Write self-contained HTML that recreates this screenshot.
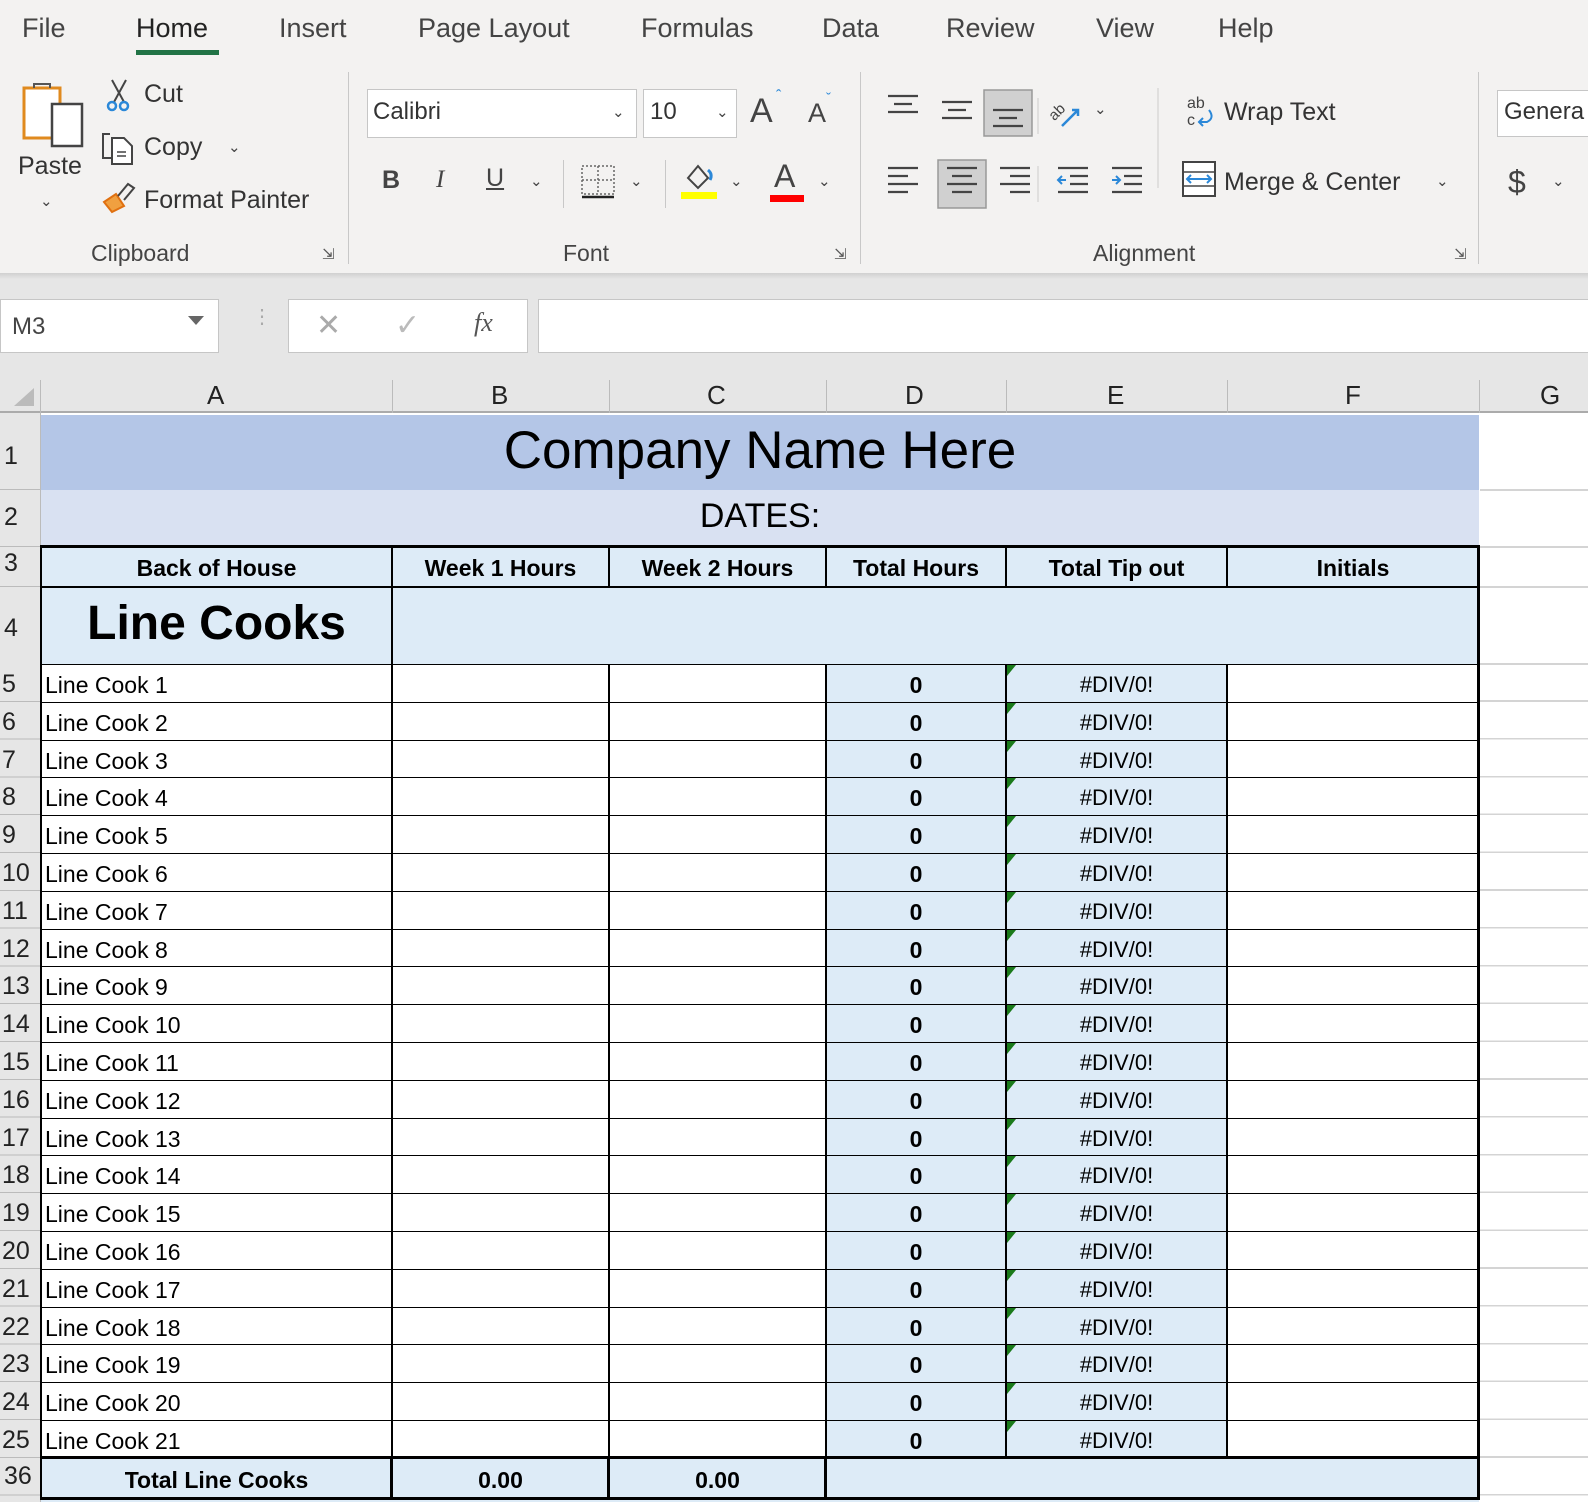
<!DOCTYPE html>
<html><head><meta charset="utf-8"><style>
*{margin:0;padding:0;box-sizing:border-box}
body{width:1588px;height:1502px;overflow:hidden;background:#fff;font-family:"Liberation Sans",sans-serif;position:relative;color:#000}
.a{position:absolute;white-space:nowrap}
.rib{position:absolute;left:0;top:0;width:1588px;height:273px;background:#f3f2f1}
.tab{position:absolute;top:13px;font-size:27px;color:#444}
.t{position:absolute;font-size:25px;color:#333;white-space:nowrap}
.gl{position:absolute;top:240px;font-size:23px;color:#444}
.sep{position:absolute;width:1px;background:#c8c8c8}
.chev{position:absolute;font-size:15px;color:#444}
.r{position:absolute;left:41px;width:1438px;height:38px;border-top:1.6px solid #000}
.r b{position:absolute;left:-41px;width:40px;top:0;height:37px;font-weight:normal;font-size:25px;color:#222;padding-left:2px;line-height:38px}
.r i{position:absolute;left:4px;font-style:normal;font-size:23px;line-height:38px;top:1px}
.r s{position:absolute;left:785px;width:180px;text-align:center;text-decoration:none;font-weight:bold;font-size:23px;line-height:38px;top:1px}
.r u{position:absolute;left:965px;width:221px;text-align:center;text-decoration:none;font-size:22px;line-height:38px;top:1px}
.r em{position:absolute;left:966px;top:0;width:0;height:0;border-top:11px solid #1a7a1a;border-right:9px solid transparent}
.v{position:absolute;width:1.6px;background:#000}
.hd{position:absolute;font-size:26px;color:#222;top:380px}
</style></head><body>
<div class="rib"></div>
<div class="a" style="left:0;top:273px;width:1588px;height:104px;background:#e6e6e6"></div>
<div class="a" style="left:0;top:273px;width:1588px;height:6px;background:linear-gradient(#d0d0d0,#e6e6e6)"></div>
<div class="tab" style="left:22px">File</div>
<div class="tab" style="left:136px;color:#222">Home</div>
<div class="a" style="left:136px;top:50px;width:83px;height:5px;background:#217346"></div>
<div class="tab" style="left:279px">Insert</div>
<div class="tab" style="left:418px">Page Layout</div>
<div class="tab" style="left:641px">Formulas</div>
<div class="tab" style="left:822px">Data</div>
<div class="tab" style="left:946px">Review</div>
<div class="tab" style="left:1096px">View</div>
<div class="tab" style="left:1218px">Help</div>
<svg class="a" style="left:18px;top:80px" width="68" height="70"><rect x="6" y="8" width="36" height="50" fill="#fff" stroke="#e08a1e" stroke-width="3"/><path d="M16 8v-4h16v4" fill="none" stroke="#555" stroke-width="2"/><rect x="34" y="24" width="30" height="42" fill="#fff" stroke="#444" stroke-width="2.5"/></svg>
<div class="t" style="left:18px;top:152px">Paste</div>
<div class="chev" style="left:40px;top:192px">&#8964;</div>
<svg class="a" style="left:104px;top:78px" width="30" height="36"><path d="M8 2l12 22M22 2L10 24" stroke="#444" stroke-width="2"/><circle cx="8" cy="28" r="4" fill="none" stroke="#2b88d8" stroke-width="2.5"/><circle cx="20" cy="28" r="4" fill="none" stroke="#2b88d8" stroke-width="2.5"/></svg>
<div class="t" style="left:144px;top:80px">Cut</div>
<svg class="a" style="left:100px;top:130px" width="38" height="36"><path d="M10 4h-7v24h8" fill="none" stroke="#444" stroke-width="2"/><path d="M12 8h12l8 8v18h-20z" fill="#fff" stroke="#444" stroke-width="2"/><path d="M17 22h9M17 26h9" stroke="#444" stroke-width="1.5"/></svg>
<div class="t" style="left:144px;top:133px">Copy</div>
<div class="chev" style="left:228px;top:138px">&#8964;</div>
<svg class="a" style="left:100px;top:180px" width="38" height="38"><path d="M4 22l12-8 8 12-12 6z" fill="#f0a040" stroke="#e07010" stroke-width="2"/><path d="M18 16l10-12 6 4-10 12" fill="none" stroke="#444" stroke-width="2"/></svg>
<div class="t" style="left:144px;top:186px">Format Painter</div>
<div class="gl" style="left:91px">Clipboard</div>
<div class="a" style="left:322px;top:245px;font-size:15px;color:#555">&#8690;</div>
<div class="sep" style="left:348px;top:72px;height:192px"></div>
<div class="a" style="left:367px;top:89px;width:270px;height:49px;background:#fff;border:1px solid #c6c6c6"></div>
<div class="t" style="left:373px;top:98px;font-size:24px">Calibri</div>
<div class="chev" style="left:612px;top:103px">&#8964;</div>
<div class="a" style="left:643px;top:89px;width:94px;height:49px;background:#fff;border:1px solid #c6c6c6"></div>
<div class="t" style="left:650px;top:98px;font-size:24px">10</div>
<div class="chev" style="left:716px;top:103px">&#8964;</div>
<div class="t" style="left:750px;top:92px;font-size:34px;color:#444">A</div>
<div class="t" style="left:776px;top:88px;font-size:16px;color:#2b88d8">&#710;</div>
<div class="t" style="left:808px;top:98px;font-size:27px;color:#444">A</div>
<div class="t" style="left:826px;top:90px;font-size:15px;color:#2b88d8">&#711;</div>
<div class="t" style="left:382px;top:166px;font-weight:bold;color:#444">B</div>
<div class="t" style="left:436px;top:166px;font-style:italic;font-family:'Liberation Serif',serif;color:#444">I</div>
<div class="t" style="left:486px;top:164px;text-decoration:underline;color:#444">U</div>
<div class="chev" style="left:530px;top:172px">&#8964;</div>
<div class="sep" style="left:563px;top:160px;height:48px"></div>
<svg class="a" style="left:580px;top:164px" width="36" height="38"><rect x="2" y="2" width="32" height="28" fill="none" stroke="#666" stroke-width="1.5" stroke-dasharray="2 2"/><path d="M18 2v28M2 16h32" stroke="#666" stroke-width="1.5" stroke-dasharray="2 2"/><path d="M2 33h32" stroke="#222" stroke-width="2.5"/></svg>
<div class="chev" style="left:630px;top:172px">&#8964;</div>
<div class="sep" style="left:665px;top:160px;height:48px"></div>
<svg class="a" style="left:680px;top:160px" width="40" height="42"><path d="M8 18l10-12 10 12-10 10z" fill="none" stroke="#444" stroke-width="2"/><path d="M28 10q5 4 2 10" fill="none" stroke="#2b88d8" stroke-width="3"/><rect x="1" y="32" width="36" height="7" fill="#ffff00"/></svg>
<div class="chev" style="left:730px;top:172px">&#8964;</div>
<div class="t" style="left:774px;top:158px;font-size:32px;color:#444">A</div>
<div class="a" style="left:770px;top:195px;width:34px;height:7px;background:#f00"></div>
<div class="chev" style="left:818px;top:172px">&#8964;</div>
<div class="gl" style="left:563px">Font</div>
<div class="a" style="left:834px;top:245px;font-size:15px;color:#555">&#8690;</div>
<div class="sep" style="left:860px;top:72px;height:192px"></div>
<svg class="a" style="left:880px;top:88px" width="590" height="125">
<g stroke="#444" stroke-width="2.2">
<path d="M8 8h30M14 16h18M8 24h30"/>
<path d="M62 14h30M68 22h18M62 30h30"/>
<rect x="104" y="2" width="48" height="46" fill="#d0d0d0" stroke="#999" stroke-width="1.5"/>
<path d="M113 22h30M119 30h18M113 38h30"/>
<path d="M8 80h30M8 88h20M8 96h30M8 104h20"/>
<rect x="58" y="72" width="48" height="48" fill="#d0d0d0" stroke="#999" stroke-width="1.5"/>
<path d="M67 80h30M72 88h20M67 96h30M72 104h20"/>
<path d="M120 80h30M130 88h20M120 96h30M130 104h20"/>
<path d="M178 80h30M190 88h18M190 96h18M178 104h30"/>
<path d="M232 80h30M244 88h18M244 96h18M232 104h30"/>
</g>
<path d="M178 92h8M182 88l-4 4 4 4" stroke="#2b88d8" stroke-width="2" fill="none"/>
<path d="M232 92h8M236 88l4 4-4 4" stroke="#2b88d8" stroke-width="2" fill="none"/>
<text x="168" y="26" font-size="15" fill="#444" font-family="Liberation Sans" transform="rotate(-45 180 22)">ab</text>
<path d="M182 38l16-16M192 22h6v6" stroke="#2b88d8" stroke-width="2.5" fill="none"/>
<path d="M158 10v36M158 78v36M278 -10v110" stroke="#ccc" stroke-width="1"/>
<text x="307" y="20" font-size="16" fill="#444" font-family="Liberation Sans">ab</text><text x="307" y="37" font-size="16" fill="#444" font-family="Liberation Sans">c</text>
<path d="M329 22q6 8-2 12h-8M323 30l-4 4 4 4" stroke="#2b88d8" stroke-width="2" fill="none"/>
<rect x="303" y="74" width="32" height="34" fill="#fff" stroke="#444" stroke-width="2"/>
<path d="M303 84h32M303 98h32" stroke="#444" stroke-width="1.5"/>
<path d="M307 91h24M311 87l-4 4 4 4M327 87l4 4-4 4" stroke="#2b88d8" stroke-width="2" fill="none"/>
</svg>
<div class="chev" style="left:1094px;top:100px">&#8964;</div>
<div class="t" style="left:1224px;top:98px">Wrap Text</div>
<div class="t" style="left:1224px;top:168px">Merge &amp; Center</div>
<div class="chev" style="left:1436px;top:172px">&#8964;</div>
<div class="gl" style="left:1093px">Alignment</div>
<div class="a" style="left:1454px;top:245px;font-size:15px;color:#555">&#8690;</div>
<div class="sep" style="left:1478px;top:72px;height:192px"></div>
<div class="a" style="left:1497px;top:90px;width:100px;height:47px;background:#fff;border:1px solid #c6c6c6"></div>
<div class="t" style="left:1504px;top:98px;font-size:24px">Genera</div>
<div class="t" style="left:1508px;top:164px;font-size:32px;color:#444">$</div>
<div class="chev" style="left:1552px;top:172px">&#8964;</div>
<div class="a" style="left:0;top:299px;width:219px;height:54px;background:#fff;border:1px solid #c6c6c6"></div>
<div class="t" style="left:12px;top:313px;font-size:24px;color:#444">M3</div>
<div class="a" style="left:188px;top:316px;width:0;height:0;border-left:8px solid transparent;border-right:8px solid transparent;border-top:9px solid #666"></div>
<div class="a" style="left:252px;top:312px;color:#aaa;font-size:20px;line-height:10px">&#8942;</div>
<div class="a" style="left:288px;top:299px;width:240px;height:54px;background:#fff;border:1px solid #c6c6c6"></div>
<div class="t" style="left:316px;top:308px;font-size:30px;color:#aaa">&#10005;</div>
<div class="t" style="left:395px;top:308px;font-size:30px;color:#bbb">&#10003;</div>
<div class="t" style="left:474px;top:308px;font-size:26px;color:#555;font-family:'Liberation Serif',serif;font-style:italic">fx</div>
<div class="a" style="left:538px;top:299px;width:1060px;height:54px;background:#fff;border:1px solid #c6c6c6"></div>
<div class="a" style="left:0;top:377px;width:1588px;height:36px;background:#e6e6e6;border-bottom:2px solid #ababab"></div>
<div class="a" style="left:14px;top:388px;width:0;height:0;border-left:20px solid transparent;border-bottom:18px solid #bbb"></div>
<div class="a" style="left:40px;top:380px;width:1px;height:33px;background:#bbb"></div>
<div class="a" style="left:392px;top:380px;width:1px;height:33px;background:#bbb"></div>
<div class="a" style="left:609px;top:380px;width:1px;height:33px;background:#bbb"></div>
<div class="a" style="left:826px;top:380px;width:1px;height:33px;background:#bbb"></div>
<div class="a" style="left:1006px;top:380px;width:1px;height:33px;background:#bbb"></div>
<div class="a" style="left:1227px;top:380px;width:1px;height:33px;background:#bbb"></div>
<div class="a" style="left:1479px;top:380px;width:1px;height:33px;background:#bbb"></div>
<div class="hd" style="left:207px">A</div>
<div class="hd" style="left:491px">B</div>
<div class="hd" style="left:707px">C</div>
<div class="hd" style="left:905px">D</div>
<div class="hd" style="left:1107px">E</div>
<div class="hd" style="left:1345px">F</div>
<div class="hd" style="left:1540px">G</div>
<div class="a" style="left:0;top:413px;width:41px;height:1089px;background:#e6e6e6;border-right:1px solid #bbb"></div>
<div class="a" style="left:1480px;top:664px;width:108px;height:838px;background:repeating-linear-gradient(#fff 0,#fff 36.2px,#d4d4d4 36.2px,#d4d4d4 37.8px)"></div>
<div class="a" style="left:1480px;top:489px;width:108px;height:1.5px;background:#d4d4d4"></div>
<div class="a" style="left:1480px;top:546px;width:108px;height:1.5px;background:#d4d4d4"></div>
<div class="a" style="left:1480px;top:586px;width:108px;height:1.5px;background:#d4d4d4"></div>
<div class="a" style="left:1480px;top:663px;width:108px;height:1.5px;background:#d4d4d4"></div>
<div class="a" style="left:41px;top:415px;width:1438px;height:75px;background:#b4c6e7"></div>
<div class="a" style="left:41px;top:490px;width:1438px;height:57px;background:#d9e1f2"></div>
<div class="a" style="left:41px;top:547px;width:1438px;height:117px;background:#ddebf7"></div>
<div class="a" style="left:0;top:489px;width:41px;height:1px;background:#bbb"></div>
<div class="a" style="left:0;top:546px;width:41px;height:1px;background:#bbb"></div>
<div class="a" style="left:0;top:586px;width:41px;height:1px;background:#bbb"></div>
<div class="a" style="left:4px;top:442px;font-size:25px;color:#222">1</div>
<div class="a" style="left:4px;top:503px;font-size:25px;color:#222">2</div>
<div class="a" style="left:4px;top:549px;font-size:25px;color:#222">3</div>
<div class="a" style="left:4px;top:614px;font-size:25px;color:#222">4</div>
<div class="a" style="left:41px;top:420px;width:1438px;text-align:center;font-size:53px">Company Name Here</div>
<div class="a" style="left:41px;top:497px;width:1438px;text-align:center;font-size:34px">DATES:</div>
<div class="a" style="left:41px;top:548px;width:351px;text-align:center;font-size:23px;font-weight:bold;line-height:40px">Back of House</div>
<div class="a" style="left:392px;top:548px;width:217px;text-align:center;font-size:23px;font-weight:bold;line-height:40px">Week 1 Hours</div>
<div class="a" style="left:609px;top:548px;width:217px;text-align:center;font-size:23px;font-weight:bold;line-height:40px">Week 2 Hours</div>
<div class="a" style="left:826px;top:548px;width:180px;text-align:center;font-size:23px;font-weight:bold;line-height:40px">Total Hours</div>
<div class="a" style="left:1006px;top:548px;width:221px;text-align:center;font-size:23px;font-weight:bold;line-height:40px">Total Tip out</div>
<div class="a" style="left:1227px;top:548px;width:252px;text-align:center;font-size:23px;font-weight:bold;line-height:40px">Initials</div>
<div class="a" style="left:41px;top:596px;width:351px;text-align:center;font-size:48px;font-weight:bold">Line Cooks</div>
<div class="a" style="left:826px;top:664px;width:401px;height:794px;background:#ddebf7"></div>
<div class="r" style="top:664px"><b>5</b><i>Line Cook 1</i><s>0</s><em></em><u>#DIV/0!</u></div>
<div class="r" style="top:701.8px"><b>6</b><i>Line Cook 2</i><s>0</s><em></em><u>#DIV/0!</u></div>
<div class="r" style="top:739.6px"><b>7</b><i>Line Cook 3</i><s>0</s><em></em><u>#DIV/0!</u></div>
<div class="r" style="top:777.4px"><b>8</b><i>Line Cook 4</i><s>0</s><em></em><u>#DIV/0!</u></div>
<div class="r" style="top:815.2px"><b>9</b><i>Line Cook 5</i><s>0</s><em></em><u>#DIV/0!</u></div>
<div class="r" style="top:853px"><b>10</b><i>Line Cook 6</i><s>0</s><em></em><u>#DIV/0!</u></div>
<div class="r" style="top:890.8px"><b>11</b><i>Line Cook 7</i><s>0</s><em></em><u>#DIV/0!</u></div>
<div class="r" style="top:928.6px"><b>12</b><i>Line Cook 8</i><s>0</s><em></em><u>#DIV/0!</u></div>
<div class="r" style="top:966.4px"><b>13</b><i>Line Cook 9</i><s>0</s><em></em><u>#DIV/0!</u></div>
<div class="r" style="top:1004.2px"><b>14</b><i>Line Cook 10</i><s>0</s><em></em><u>#DIV/0!</u></div>
<div class="r" style="top:1042px"><b>15</b><i>Line Cook 11</i><s>0</s><em></em><u>#DIV/0!</u></div>
<div class="r" style="top:1079.8px"><b>16</b><i>Line Cook 12</i><s>0</s><em></em><u>#DIV/0!</u></div>
<div class="r" style="top:1117.6px"><b>17</b><i>Line Cook 13</i><s>0</s><em></em><u>#DIV/0!</u></div>
<div class="r" style="top:1155.4px"><b>18</b><i>Line Cook 14</i><s>0</s><em></em><u>#DIV/0!</u></div>
<div class="r" style="top:1193.2px"><b>19</b><i>Line Cook 15</i><s>0</s><em></em><u>#DIV/0!</u></div>
<div class="r" style="top:1231px"><b>20</b><i>Line Cook 16</i><s>0</s><em></em><u>#DIV/0!</u></div>
<div class="r" style="top:1268.8px"><b>21</b><i>Line Cook 17</i><s>0</s><em></em><u>#DIV/0!</u></div>
<div class="r" style="top:1306.6px"><b>22</b><i>Line Cook 18</i><s>0</s><em></em><u>#DIV/0!</u></div>
<div class="r" style="top:1344.4px"><b>23</b><i>Line Cook 19</i><s>0</s><em></em><u>#DIV/0!</u></div>
<div class="r" style="top:1382.2px"><b>24</b><i>Line Cook 20</i><s>0</s><em></em><u>#DIV/0!</u></div>
<div class="r" style="top:1420px"><b>25</b><i>Line Cook 21</i><s>0</s><em></em><u>#DIV/0!</u></div>
<div class="a" style="left:0;top:664px;width:41px;height:838px;background:repeating-linear-gradient(transparent 0,transparent 36.8px,#bbb 36.8px,#bbb 37.8px)"></div>
<div class="a" style="left:41px;top:1458px;width:1438px;height:44px;background:#ddebf7"></div>
<div class="a" style="left:4px;top:1462px;font-size:25px;color:#222">36</div>
<div class="a" style="left:41px;top:1461px;width:351px;text-align:center;font-size:23px;font-weight:bold;line-height:38px">Total Line Cooks</div>
<div class="a" style="left:392px;top:1461px;width:217px;text-align:center;font-size:23px;font-weight:bold;line-height:38px">0.00</div>
<div class="a" style="left:609px;top:1461px;width:217px;text-align:center;font-size:23px;font-weight:bold;line-height:38px">0.00</div>
<div class="a" style="left:41px;top:545px;width:1439px;height:3px;background:#000"></div>
<div class="a" style="left:41px;top:586px;width:1438px;height:1.6px;background:#000"></div>
<div class="a" style="left:41px;top:1456px;width:1439px;height:3px;background:#000"></div>
<div class="a" style="left:41px;top:1497px;width:1439px;height:3px;background:#000"></div>
<div class="v" style="left:40px;top:545px;height:955px;width:2px"></div>
<div class="v" style="left:1477px;top:545px;height:955px;width:3px"></div>
<div class="v" style="left:391px;top:547px;height:953px"></div>
<div class="v" style="left:608px;top:547px;height:40px"></div>
<div class="v" style="left:825px;top:547px;height:40px"></div>
<div class="v" style="left:1005px;top:547px;height:40px"></div>
<div class="v" style="left:1226px;top:547px;height:40px"></div>
<div class="v" style="left:608px;top:664px;height:836px"></div>
<div class="v" style="left:825px;top:664px;height:836px"></div>
<div class="v" style="left:1005px;top:664px;height:794px"></div>
<div class="v" style="left:1226px;top:664px;height:794px"></div>
<div class="v" style="left:390px;top:1458px;height:42px;width:3px"></div>
<div class="v" style="left:607px;top:1458px;height:42px;width:3px"></div>
<div class="v" style="left:824px;top:1458px;height:42px;width:3px"></div>
</body></html>
